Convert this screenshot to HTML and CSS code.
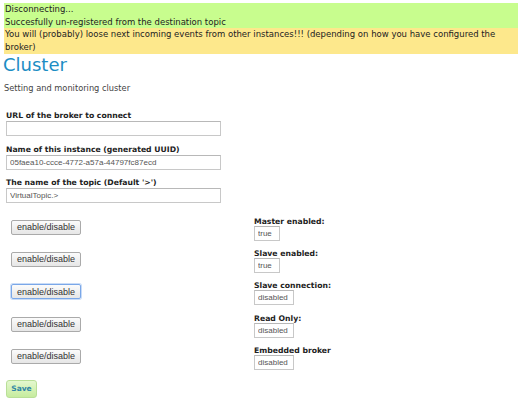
FILE: index.html
```html
<!DOCTYPE html>
<html>
<head>
<meta charset="utf-8">
<link rel="stylesheet" href="styles.css">
</head>
<body>
<div class="msg msg-ok">
  <div>Disconnecting...</div>
  <div>Succesfully un-registered from the destination topic</div>
</div>
<div class="msg msg-warn">You will (probably) loose next incoming events from other instances!!! (depending on how you have configured the broker)</div>
<h1 class="title">Cluster</h1>
<p class="subtitle">Setting and monitoring cluster</p>
<form class="form">
  <div class="fields">
    <div class="field">
      <label class="label">URL of the broker to connect</label>
      <input class="text wide" type="text" value="">
    </div>
    <div class="field">
      <label class="label">Name of this instance (generated UUID)</label>
      <input class="text wide" type="text" value="05faea10-ccce-4772-a57a-44797fc87ecd">
    </div>
    <div class="field">
      <label class="label">The name of the topic (Default '&gt;')</label>
      <input class="text wide" type="text" value="VirtualTopic.&gt;">
    </div>
  </div>
  <div class="grid">
    <div class="cell-btn"><button type="button" class="btn">enable/disable</button></div>
    <div class="cell-info"><div class="label">Master enabled:</div><input class="text small" type="text" value="true"></div>
    <div class="cell-btn"><button type="button" class="btn">enable/disable</button></div>
    <div class="cell-info"><div class="label">Slave enabled:</div><input class="text small" type="text" value="true"></div>
    <div class="cell-btn"><button type="button" class="btn focus">enable/disable</button></div>
    <div class="cell-info"><div class="label">Slave connection:</div><input class="text mid" type="text" value="disabled"></div>
    <div class="cell-btn"><button type="button" class="btn">enable/disable</button></div>
    <div class="cell-info"><div class="label">Read Only:</div><input class="text mid" type="text" value="disabled"></div>
    <div class="cell-btn"><button type="button" class="btn">enable/disable</button></div>
    <div class="cell-info"><div class="label">Embedded broker</div><input class="text mid" type="text" value="disabled"></div>
  </div>
  <button type="button" class="save">Save</button>
</form>
</body>
</html>
```
FILE: styles.css
```css
html, body {
  margin: 0;
  padding: 0;
  background: #fff;
}
body {
  padding: 3px 4px 0 4px;
  font-family: "DejaVu Sans", Verdana, sans-serif;
  font-size: 9px;
  color: #333;
}
.msg {
  font-size: 8.5px;
  line-height: 12.5px;
  color: #222;
  padding: 0 1px;
}
.msg-ok {
  background: #c8fd8e;
}
.msg-warn {
  background: #fde88c;
  padding-bottom: 1px;
}
.title {
  margin: 0;
  font-size: 18px;
  font-weight: normal;
  color: #1c8dc4;
  line-height: 22px;
  margin-left: -1px;
}
.subtitle {
  margin: 6px 0 0 0;
  font-size: 8.25px;
  color: #444;
  line-height: 12px;
}
.form {
  margin-top: 16px;
  padding-left: 2px;
}
.fields {
  display: flex;
  flex-direction: column;
  gap: 7.5px;
}
.field {
  display: flex;
  flex-direction: column;
  align-items: flex-start;
}
.label {
  font-family: "DejaVu Sans", Verdana, sans-serif;
  font-weight: bold;
  font-size: 7.7px;
  color: #222;
  line-height: 11px;
}
.cell-info .label {
  line-height: 8px;
  margin-bottom: 0;
}
.text {
  box-sizing: border-box;
  height: 15px;
  border: 1px solid #c8c8c8;
  border-top-color: #b8b8b8;
  padding: 0 3px;
  font-family: "Liberation Sans", Arial, sans-serif;
  font-size: 8px;
  color: #555;
  background: #fff;
  margin: 0;
  outline: none;
}
.wide { width: 215px; }
.small { width: 26px; }
.mid { width: 40px; }
.grid {
  display: grid;
  grid-template-columns: 248px auto;
  grid-auto-rows: 32.3px;
  margin-top: 8px;
}
.cell-btn {
  display: flex;
  align-items: center;
  padding-left: 5px;
}
.cell-info {
  display: flex;
  flex-direction: column;
  justify-content: center;
  align-items: flex-start;
  padding-top: 4px;
}
.btn {
  box-sizing: border-box;
  width: 70px;
  height: 15px;
  padding: 0;
  font-family: "Liberation Sans", Arial, sans-serif;
  font-size: 9px;
  color: #333;
  border: 1px solid #aaa;
  border-radius: 2px;
  background: linear-gradient(#fbfbfb, #e6e6e6);
}
.btn.focus {
  border-color: #7aa7e8;
  box-shadow: 0 0 0 1px #c9dcf7;
}
.save {
  margin-top: 7.5px;
  box-sizing: border-box;
  width: 31px;
  height: 18px;
  padding: 0;
  font-family: "DejaVu Sans", Verdana, sans-serif;
  font-size: 7.5px;
  font-weight: bold;
  color: #2f86a6;
  border: 1px solid #b9df98;
  border-radius: 3px;
  background: linear-gradient(#e4f8cf, #c6ec9e);
}
```
